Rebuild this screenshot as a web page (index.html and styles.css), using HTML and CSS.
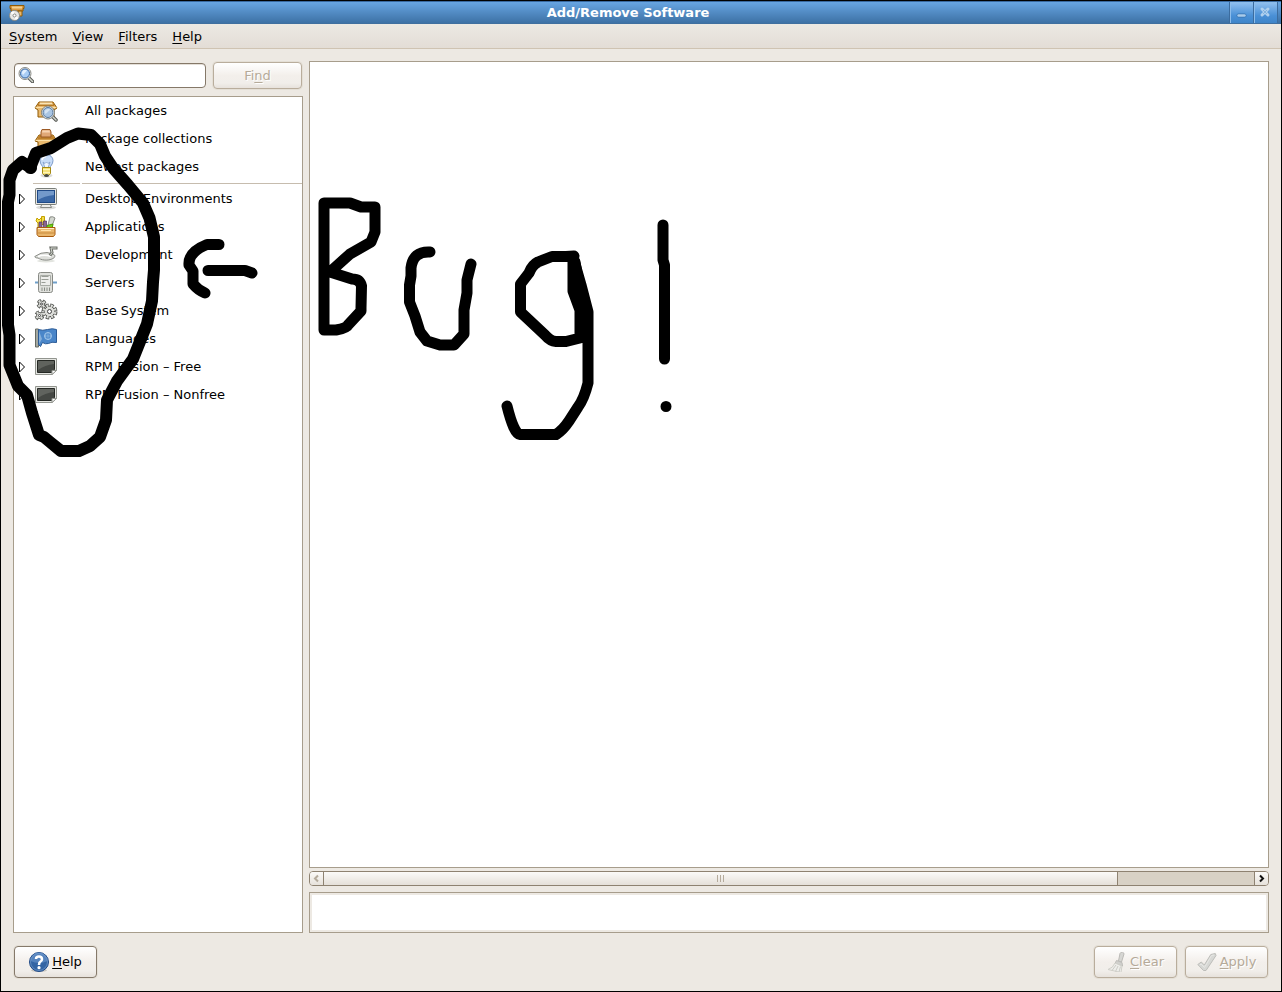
FILE: index.html
```html
<!DOCTYPE html>
<html lang="en">
<head>
<meta charset="utf-8">
<title>Add/Remove Software</title>
<link rel="stylesheet" href="styles.css">
</head>
<body>
<div class="window">
  <header class="titlebar">
    <svg class="title-icon" viewBox="0 0 16 16" aria-hidden="true">
      <path d="M1 .5h14v3h-1v2.500H2v-2.500H1z" fill="#d89842" stroke="#8f5902"/>
      <path d="M3 1.500h10v2H3z" fill="#f3cf8c"/>
      <path d="M9 6h4v5H9z" fill="#e9b96e" stroke="#8f5902"/>
      <circle cx="5.500" cy="10.500" r="5" fill="#e8e8e6" stroke="#888a85"/>
      <path d="M5.500 10.500L1.500 8a5 5 0 0 1 3-2zM5.500 10.500l4 2.500a5 5 0 0 1-3 2z" fill="#fff"/>
      <circle cx="5.500" cy="10.500" r="1.500" fill="#fff" stroke="#888a85"/>
    </svg>
    <h1 class="title">Add/Remove Software</h1>
    <div class="controls">
      <button class="control" type="button" aria-label="Minimize"><svg viewBox="0 0 22 21"><path d="M8.500 13.500h6" stroke="#3673b0" stroke-width="4" stroke-linecap="round"/><path d="M8.500 13.500h6" stroke="#a9cbea" stroke-width="2.500" stroke-linecap="round"/></svg></button>
      <button class="control" type="button" aria-label="Close"><svg viewBox="0 0 22 21"><path d="M8 7l6 6M14 7l-6 6" stroke="#b0d0ee" stroke-width="3" stroke-linecap="round"/><path d="M9 8l4 4M13 8l-4 4" stroke="#82b2de" stroke-width="1"/></svg></button>
    </div>
  </header>
  <nav class="menubar">
    <button type="button"><u>S</u>ystem</button>
    <button type="button"><u>V</u>iew</button>
    <button type="button"><u>F</u>ilters</button>
    <button type="button"><u>H</u>elp</button>
  </nav>
  <main class="content">
    <section class="sidebar">
      <form class="search">
        <label class="search-box">
          <svg class="icon16" viewBox="0 0 16 16" aria-hidden="true">
            <path d="M11 11l3.500 3.500" stroke="#555753" stroke-width="3.500" stroke-linecap="round"/>
            <path d="M11 11l3.500 3.500" stroke="#d3d7cf" stroke-width="1.500" stroke-linecap="round"/>
            <circle cx="7" cy="6.500" r="6" fill="#e8e8e6" stroke="#888a85"/>
            <circle cx="7" cy="6.500" r="4.500" fill="#a9cdf5" stroke="#3465a4"/>
            <path d="M4 6a3 3 0 0 1 5-2.500L5 8z" fill="#e3f0ff"/>
          </svg>
          <input type="text" aria-label="Search packages">
        </label>
        <button class="button find" type="submit" disabled><span>Fi<u>n</u>d</span></button>
      </form>
      <ul class="groups">
        <li><span class="twist"></span>
          <svg class="icon" viewBox="0 0 24 24" aria-hidden="true">
            <path d="M5 3h14l4 6-3 2v7H4v-7L1 9z" fill="#e9b96e" stroke="#8f5902"/><path d="M5 3h14l1.500 4h-17z" fill="#b97a25"/><path d="M6 3.500h12l1 2H5z" fill="#fbe5b6"/><path d="M1.500 8.500h21" stroke="#fbe0a8"/>
            <path d="M18 17l4 4" stroke="#555753" stroke-width="3.500" stroke-linecap="round"/><path d="M18 17l4 4" stroke="#d3d7cf" stroke-width="1.500" stroke-linecap="round"/>
            <circle cx="14" cy="13.500" r="6.500" fill="#eeeeec" stroke="#7c807b"/><circle cx="14" cy="13.500" r="5" fill="#a9c5e3" stroke="#54779e"/><path d="M10.500 13a4 4 0 0 1 6-2.500l-5 4.500z" fill="#d4e3f2"/>
          </svg><a href="#all">All packages</a></li>
        <li><span class="twist"></span>
          <svg class="icon" viewBox="0 0 24 24" aria-hidden="true">
            <path d="M5 8h14l4 6-3 1v6H4v-6l-3-1z" fill="#e9b96e" stroke="#8f5902"/><path d="M5 8.500h14l2 4H3z" fill="#bd802b"/><path d="M1.500 13.500h21" stroke="#fbe0a8"/><path d="M7 5l1-2.500h8L17 5v5H7z" fill="#e0a877" stroke="#9c5a25"/><path d="M8.500 3.500h7l.5 2H8z" fill="#f7d3b1"/>
          </svg><a href="#collections">Package collections</a></li>
        <li><span class="twist"></span>
          <svg class="icon" viewBox="0 0 24 24" aria-hidden="true">
            <ellipse cx="12.500" cy="20.500" rx="6" ry="2" fill="#dcdcda"/><path d="M9 13c0-2-3-3.500-3-7.500a6.500 6 0 0 1 13 0c0 4-3 5.500-3 7.500z" fill="#c7dcf8" stroke="#7d9cc9"/><path d="M11 13l-2-6 2 1.500L12.500 7 14 8.500 16 7l-2 6" fill="#eef5ff" stroke="#7d9cc9" stroke-width=".8"/><path d="M8 5a4.500 4.500 0 0 1 4-3.500" stroke="#fff" stroke-width="1.500" fill="none"/><path d="M8.500 12.500h8v6l-2 2h-4l-2-2z" fill="#f6e27a" stroke="#a58a12"/><path d="M9 14.500h7M9 17.500h7" stroke="#fff6b8"/><ellipse cx="12.500" cy="20.500" rx="2.500" ry="1.500" fill="#454743"/>
          </svg><a href="#newest">Newest packages</a></li>
        <li class="divider" role="separator"><i></i><i></i></li>
        <li><button class="twist" type="button" aria-label="Expand Desktop Environments"><svg viewBox="0 0 8 12"><path d="M1.500 1v10l5-5z"/></svg></button>
          <svg class="icon" viewBox="0 0 24 24" aria-hidden="true">
            <ellipse cx="12" cy="20.500" rx="10" ry="2" fill="#dcdcda"/><path d="M8 17h8l1.500 3.500h-11z" fill="#eeeeec" stroke="#888a85"/><rect x="1.500" y="1.500" width="21" height="16" rx="1" fill="#e5e5e2" stroke="#7a7e79"/><rect x="3.500" y="3.500" width="17" height="12" fill="#3b68a6" stroke="#204a87"/><path d="M4 4h16v4Q10 9 4 13z" fill="#7399ca"/>
          </svg><a href="#desktop">Desktop Environments</a></li>
        <li><button class="twist" type="button" aria-label="Expand Applications"><svg viewBox="0 0 8 12"><path d="M1.500 1v10l5-5z"/></svg></button>
          <svg class="icon" viewBox="0 0 24 24" aria-hidden="true">
            <path d="M3 3l2 2 2-2 1 3-2 2v5H4V8L2 6z" fill="#fce94f" stroke="#c4a000"/><path d="M7.500 1.500h3v8h-3z" fill="#f1dc4b" stroke="#c4a000"/><path d="M5 7h3v6H5zM9.500 6h3v7h-3z" fill="#8a6590" stroke="#4d3260" stroke-width=".7"/><path d="M14 10l2-8q3-1 5 1l-3 8z" fill="#d3d7cf" stroke="#888a85"/><path d="M13 10.500l6-1.500-1 5h-5z" fill="#73d216" stroke="#4e9a06"/><path d="M3 12.500h18v7l-1.500 2h-15l-1.500-2z" fill="#e9b66c" stroke="#a85b0e"/><path d="M4 13.500h16" stroke="#fff0c9"/><path d="M4 18h16" stroke="#c98b3b"/><path d="M7 15.500h10" stroke="#ffe1a8"/>
          </svg><a href="#applications">Applications</a></li>
        <li><button class="twist" type="button" aria-label="Expand Development"><svg viewBox="0 0 8 12"><path d="M1.500 1v10l5-5z"/></svg></button>
          <svg class="icon" viewBox="0 0 24 24" aria-hidden="true">
            <ellipse cx="12" cy="18" rx="9" ry="1.500" fill="#e2e4df"/><path d="M.8 13.500Q7 9 13 9.500l6 1.500c3 1 2 4-1 5-5 2-11 1-14-1-2 0-3-.5-3.200-1.500z" fill="#dedfdb" stroke="#888a85"/><path d="M4 13.500q6-2.500 13 0" stroke="#fff" fill="none" stroke-width="1.500"/><path d="M16 12.500l2-3-1-4.500h6.500" stroke="#6c6f69" stroke-width="3" fill="none"/><path d="M16.500 12l1.500-2.500-1-4.500h5.500" stroke="#d3d7cf" fill="none"/>
          </svg><a href="#development">Development</a></li>
        <li><button class="twist" type="button" aria-label="Expand Servers"><svg viewBox="0 0 8 12"><path d="M1.500 1v10l5-5z"/></svg></button>
          <svg class="icon" viewBox="0 0 24 24" aria-hidden="true">
            <path d="M1 11.500h22" stroke="#6f9fc9" stroke-width="2"/><path d="M4.500 3.500q0-2 2-2h10q2 0 2 2v16q0 2-2 2h-10q-2 0-2-2z" fill="#dfe0dc" stroke="#888a85"/><path d="M6.500 4.500h10v10h-10z" fill="#eeeeec" stroke="#a9aca6"/><path d="M7.500 5.500h7M7.500 8.500h7M7.500 11.500h4" stroke="#989c95"/><path d="M8 16.500v3.500M10.500 16.500v3.500M13 16.500v3.500M15.500 16.500v3.500" stroke="#888c85"/>
          </svg><a href="#servers">Servers</a></li>
        <li><button class="twist" type="button" aria-label="Expand Base System"><svg viewBox="0 0 8 12"><path d="M1.500 1v10l5-5z"/></svg></button>
          <svg class="icon" viewBox="0 0 24 24" aria-hidden="true">
            <g fill="#dddeda" stroke="#555753">
              <circle cx="15.500" cy="12.500" r="6" stroke-width="4" stroke-dasharray="3.200 1.512"/><circle cx="15.500" cy="12.500" r="5.200"/>
              <circle cx="7.500" cy="5" r="3.300" stroke-width="3.400" stroke-dasharray="3.200 1.983" stroke-dashoffset="-1"/><circle cx="7.500" cy="5" r="3"/>
              <circle cx="5.500" cy="16.500" r="3.300" stroke-width="3.400" stroke-dasharray="3.200 1.983" stroke-dashoffset="-1"/><circle cx="5.500" cy="16.500" r="3"/>
            </g>
            <g fill="none" stroke="#dddeda">
              <circle cx="15.500" cy="12.500" r="5.700" stroke-width="2.800" stroke-dasharray="1.800 2.676" stroke-dashoffset="-.7"/>
              <circle cx="7.500" cy="5" r="3.200" stroke-width="2" stroke-dasharray="1.800 3.226" stroke-dashoffset="-1.700"/>
              <circle cx="5.500" cy="16.500" r="3.200" stroke-width="2" stroke-dasharray="1.800 3.226" stroke-dashoffset="-1.700"/>
            </g>
            <g fill="#fff" stroke="#444"><circle cx="15.500" cy="12.500" r="2"/><circle cx="7.500" cy="5" r="1"/><circle cx="5.500" cy="16.500" r="1"/></g>
          </svg><a href="#base">Base System</a></li>
        <li><button class="twist" type="button" aria-label="Expand Languages"><svg viewBox="0 0 8 12"><path d="M1.500 1v10l5-5z"/></svg></button>
          <svg class="icon" viewBox="0 0 24 24" aria-hidden="true">
            <path d="M1.500 2h3v18h-3z" fill="#a4a8a0" stroke="#666a63"/><path d="M4.500 2.500q4 1.500 9 0t9 0v13q-5-1-8 1-3 1-6-1l-2 4-2-2z" fill="#4a86c9" stroke="#2b5b97"/><path d="M5 4v13l3-5z" fill="#86afd9"/><circle cx="14" cy="9" r="3.500" fill="none" stroke="#a9cbec"/><path d="M10.500 9h7M14 5.500v7M12 6.500q-1.500 2.500 0 5M16 6.500q1.500 2.500 0 5" stroke="#91bae2" fill="none" stroke-width=".7"/>
          </svg><a href="#languages">Languages</a></li>
        <li><button class="twist" type="button" aria-label="Expand RPM Fusion Free"><svg viewBox="0 0 8 12"><path d="M1.500 1v10l5-5z"/></svg></button>
          <svg class="icon" viewBox="0 0 24 24" aria-hidden="true">
            <path d="M1.500 3.500h21v12l-4.500 4H1.500z" fill="#e4e5e1" stroke="#92958f"/><path d="M3.500 5.500h17v9l-3 3h-14z" fill="#454844" stroke="#252824"/><path d="M4 6h16v3Q11 10 4 15z" fill="#60635e"/><path d="M18 19.500v-4h4.500z" fill="#fff" stroke="#92958f"/>
          </svg><a href="#free">RPM Fusion – Free</a></li>
        <li><button class="twist" type="button" aria-label="Expand RPM Fusion Nonfree"><svg viewBox="0 0 8 12"><path d="M1.500 1v10l5-5z"/></svg></button>
          <svg class="icon" viewBox="0 0 24 24" aria-hidden="true">
            <path d="M1.500 3.500h21v12l-4.500 4H1.500z" fill="#e4e5e1" stroke="#92958f"/><path d="M3.500 5.500h17v9l-3 3h-14z" fill="#454844" stroke="#252824"/><path d="M4 6h16v3Q11 10 4 15z" fill="#60635e"/><path d="M18 19.500v-4h4.500z" fill="#fff" stroke="#92958f"/>
          </svg><a href="#nonfree">RPM Fusion – Nonfree</a></li>
      </ul>
    </section>
    <section class="results">
      <div class="packages"></div>
      <div class="scrollbar">
        <button class="step" type="button" aria-label="Scroll left" disabled><svg viewBox="0 0 13 13"><path d="M8 3.500l-3 3 3 3" stroke="#b5ab9c"/></svg></button>
        <div class="track"><div class="thumb"><i></i><i></i><i></i></div></div>
        <button class="step" type="button" aria-label="Scroll right"><svg viewBox="0 0 13 13"><path d="M5 3.500l3 3-3 3" stroke="#111"/></svg></button>
      </div>
      <textarea class="details" aria-label="Package description" readonly></textarea>
    </section>
  </main>
  <footer class="actions">
    <button class="button help" type="button">
      <svg class="icon20" viewBox="0 0 20 20" aria-hidden="true">
        <ellipse cx="10" cy="18.500" rx="8" ry="1.500" fill="#c8c5be"/><circle cx="10" cy="10" r="9.500" fill="#3465a4" stroke="#204a87"/><path d="M1.500 9a8.500 8.500 0 0 1 17 0q-8 4-17 0z" fill="#5583bd"/><circle cx="10" cy="10" r="8.500" fill="none" stroke="#739bcb" stroke-width=".7"/><path d="M7 7Q7 4.500 10 4.500t3 2.800q0 1.700-1.800 2.500Q10 10.500 10 13" stroke="#fff" stroke-width="2.500" fill="none"/><circle cx="10" cy="15.700" r="1.600" fill="#fff"/>
      </svg><span><u>H</u>elp</span></button>
    <button class="button" type="button" disabled>
      <svg class="icon20" viewBox="0 0 20 20" aria-hidden="true">
        <path d="M11.500 9L13 1.500Q14-.3 15.500.2T17 2l-2.500 8z" fill="#d6d6d3" stroke="#bbbab6"/><path d="M9.500 8.500l5.500 2 .5 3.500-7.500-2.500z" fill="#d0d0cd" stroke="#bdbcb8"/><path d="M8 11l7 3-1 6.500-13-3Q6 16 8 11z" fill="#eeeeeb" stroke="#d0cfc9"/><path d="M9 13l-4 5.500M11 14l-2.500 5.500M13.500 14.500L12 20" stroke="#cccbc5" fill="none"/>
      </svg><span><u>C</u>lear</span></button>
    <button class="button" type="button" disabled>
      <svg class="icon20" viewBox="0 0 20 20" aria-hidden="true">
        <path d="M.8 12.500l3.500-2.500 3 3 6.500-10.500 4.500-1 .7 2L9 18.500H6.500z" fill="#d7d8d5" stroke="#bdbdb9"/><path d="M3 13l1-1 3.500 3.500 7-12L17 3" stroke="#e7e7e4" fill="none"/>
      </svg><span><u>A</u>pply</span></button>
  </footer>
  <svg class="scribble" viewBox="0 0 700 470" role="img" aria-label="Hand-drawn circle around the group icons, with an arrow and the word Bug!">
    <path stroke-width="12" d="M31 168L22 162 13 170 9.500 180V195L8 202V325L9.500 335V365L18 386 27 395 32 413 39 435 44 437 50 442 61 451H79L90 446 100 437 106 420 107 400 117 381 133 359 147 324 152 301 153 282 154 270V237L149.500 218 143 203 128 185 113 168 105 156 100 144 91 135 78 133.500 67 138 51 148 36 153 30 168"/>
    <path d="M219 244.500H207Q188 252 189 265L193 271V284Q198 290 205 293M208 270.500H245L252 273"/>
    <path d="M324 203V330H336Q347 328 348 325L361 311 361 308 361.500 286Q360 279 352 279L330 272 350 254 371 242 375 232V207H361L350 203H324"/>
    <path d="M430 252Q413 251 411 268V276L409.500 285V302L415 316 420 332 427 341 440 345H454L464 334V310L467 293V280L471 264"/>
    <path d="M574 256L566 256.500H552L538 262Q532 265 529 273L520.500 284V312L545 335Q550 341 556 341.500H566L580 338V310L573 291V257L581 285 588 312V383Q584 399 578 407L569 421Q563 430 556 434.500H520Q514 434 507 406"/>
    <path d="M575 262L583 310V330" />
    <path d="M663 225V260L664.500 265V359M666 406.500v.01"/>
  </svg>
</div>
</body>
</html>
```
FILE: styles.css
```css
* { box-sizing: border-box; }

body {
  margin: 0;
  font: 13px/16px "DejaVu Sans", sans-serif;
  color: #000;
}

button, input, textarea { font: inherit; color: inherit; }
button { padding: 0; border: 0; background: none; }
a { color: inherit; text-decoration: none; }
u { text-underline-offset: 2px; text-decoration-skip-ink: none; }

.window {
  position: relative;
  display: flex;
  flex-direction: column;
  min-height: 100vh;
  border: 1px solid #000;
  background: #ede9e3;
}

.titlebar {
  display: flex;
  align-items: center;
  height: 23px;
  padding: 0 3px 0 8px;
  border-top: 1px solid #3869a0;
  border-bottom: 1px solid #3f6f9f;
  background: linear-gradient(#67a5e2, #3d71a5);
}
.title-icon { width: 16px; height: 16px; }
.title {
  flex: 1;
  margin: 0;
  padding-left: 2px;
  font-size: 13px;
  line-height: 20px;
  text-align: center;
  color: #fff;
}
.controls { display: flex; border-right: 1px solid #3c6c9e; }
.control {
  width: 24px;
  height: 21px;
  border-left: 1px solid #3c6c9e;
  background: linear-gradient(#92c1f0, #4a90d6 65%, #3f85c9);
  box-shadow: inset 1px 1px #8dbdeb;
}
.control svg { display: block; width: 22px; height: 21px; }

.menubar {
  display: flex;
  gap: 15px;
  height: 25px;
  padding: 1px 8px 0;
  border-bottom: 1px solid #cfc3b2;
  background: linear-gradient(#ece9e3, #e3ddd6);
}

.content {
  flex: 1;
  display: flex;
  gap: 6px;
  padding: 12px 12px 0;
}
.sidebar { flex: 0 0 290px; min-width: 0; display: flex; flex-direction: column; }
.results { flex: 1; min-width: 0; display: flex; flex-direction: column; }

.search {
  display: flex;
  gap: 7px;
  padding: 1px 1px 7px;
}
.search-box {
  flex: 1;
  min-width: 0;
  display: flex;
  align-items: center;
  gap: 4px;
  height: 25px;
  margin-top: 1px;
  padding: 0 3px 1px;
  border: 1px solid #857868;
  border-radius: 4px;
  background: #fff;
  box-shadow: inset 0 1px #e4dfd8;
}
.search-box input {
  flex: 1;
  min-width: 0;
  padding: 0;
  border: 0;
  outline: 0;
  background: none;
}
.icon16 { width: 16px; height: 16px; }

.button {
  display: flex;
  align-items: center;
  justify-content: center;
  gap: 3px;
  width: 83px;
  height: 32px;
  border: 1px solid #85796a;
  border-radius: 4px;
  background: linear-gradient(#fff, #f3efeb 50%, #f1eeea 80%, #e7e2dc);
  box-shadow: 0 0 0 1px #e4dfd6;
}
.button:disabled {
  border-color: #b9ad9c;
  color: #b5aa99;
  text-shadow: 1px 1px #fff;
}
.find { width: 89px; height: 27px; }
.icon20 { width: 20px; height: 20px; }

.groups {
  flex: 1;
  margin: 0;
  padding: 0;
  list-style: none;
  border: 1px solid #a79d8c;
  background: #fff;
}
.groups li { display: flex; align-items: center; height: 28px; }
.groups a { padding-bottom: 1px; }
.twist { width: 8px; height: 14px; margin: 0 8px 0 4px; }
.twist svg { display: block; width: 8px; height: 12px; fill: #fff; stroke: #000; }
.icon { width: 24px; height: 24px; margin-right: 27px; }
.groups .divider { gap: 2px; height: 4px; padding-left: 19px; }
.divider i { flex: 1; height: 1px; background: #c6bcae; }
.divider i:first-child { flex: 0 0 47px; }

.packages { flex: 1; border: 1px solid #a79d8c; background: #fff; }

.scrollbar {
  display: flex;
  height: 15px;
  margin: 3px 0 6px;
  border: 1px solid #8e8271;
  border-radius: 4px;
  overflow: hidden;
}
.step {
  width: 13px;
  background: linear-gradient(#fbfaf8, #e7e2db);
}
.step svg { display: block; width: 13px; height: 13px; fill: none; stroke-width: 2; }
.track {
  flex: 1;
  border: solid #8e8271;
  border-width: 0 1px;
  background: #d8d1c5;
}
.thumb {
  display: flex;
  align-items: center;
  justify-content: center;
  gap: 2px;
  width: 85.4%;
  height: 100%;
  border-right: 1px solid #8e8271;
  background: linear-gradient(#fbfaf8, #e5e0d9);
}
.thumb i { width: 1px; height: 7px; background: #b5ab9c; }

.details {
  display: block;
  width: 100%;
  height: 41px;
  padding: 0;
  border: 1px solid #a79d8c;
  outline: 0;
  resize: none;
  background: #fff;
  box-shadow: inset 0 0 0 2px #ede9e3;
}

.actions {
  display: flex;
  gap: 8px;
  padding: 13px;
}
.help { margin-right: auto; }

.scribble {
  position: absolute;
  top: -1px;
  left: -1px;
  width: 700px;
  height: 470px;
  fill: none;
  stroke: #000;
  stroke-width: 11;
  stroke-linecap: round;
  stroke-linejoin: round;
  pointer-events: none;
}
```
